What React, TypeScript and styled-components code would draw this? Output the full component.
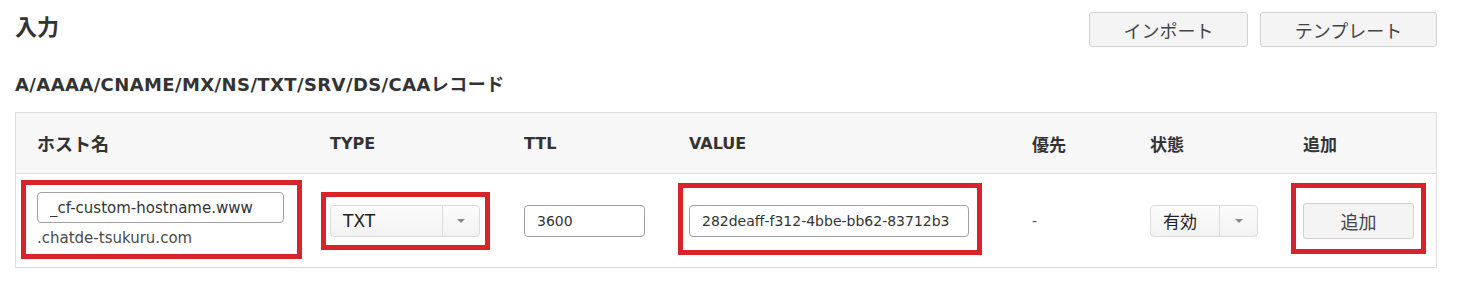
import React from "react";
import styled, { createGlobalStyle } from "styled-components";

const GlobalStyle = createGlobalStyle`
  html, body { margin: 0; padding: 0; background: #ffffff; }
  body {
    font-family: "DejaVu Sans", "Noto Sans CJK JP", sans-serif;
    color: #333333;
  }
  * { box-sizing: border-box; }
`;

const Page = styled.div`
  width: 1462px;
  padding: 12px 25px 0 15px;
`;

const TopBar = styled.div`
  display: flex;
  justify-content: space-between;
  align-items: flex-start;
`;

const Title = styled.h2`
  margin: 0;
  font-size: 22px;
  line-height: 31px;
  font-weight: 700;
  color: #333333;
`;

const ButtonGroup = styled.div`
  display: flex;
  gap: 12px;
`;

const GrayButton = styled.button<{ $width: number; $height?: number }>`
  width: ${(p) => p.$width}px;
  height: ${(p) => p.$height ?? 35}px;
  padding: 0;
  border: 1px solid #d2d2d2;
  border-radius: 3px;
  background: #f4f4f4;
  font-family: "Noto Sans CJK JP", sans-serif;
  font-size: 18px;
  color: #444444;
  cursor: pointer;
`;

const SubTitle = styled.h3`
  margin: 26px 0 15px;
  font-size: 18px;
  letter-spacing: 0.4px;
  line-height: 24px;
  font-weight: 700;
  color: #333333;
`;

const Table = styled.div`
  border: 1px solid #dddddd;
  width: 1422px;
`;

const columns = "293px 194px 165px 343px 118px 153px 154px";

const HeaderRow = styled.div`
  display: grid;
  grid-template-columns: ${columns};
  height: 61px;
  background: #f7f7f7;
  border-bottom: 1px solid #dddddd;
`;

const BodyRow = styled.div`
  display: grid;
  grid-template-columns: ${columns};
  height: 93px;
`;

const HeadCell = styled.div<{ $size?: number }>`
  display: flex;
  align-items: center;
  padding-left: 21px;
  font-size: ${(p) => p.$size ?? 16}px;
  font-weight: 700;
  color: #333333;
`;

const Cell = styled.div`
  display: flex;
  align-items: center;
  padding-left: 21px;
`;

const Stack = styled.div`
  display: flex;
  flex-direction: column;
`;

const TextInput = styled.input<{ $width: number; $height?: number; $size?: number }>`
  width: ${(p) => p.$width}px;
  height: ${(p) => p.$height ?? 32}px;
  padding: 0 12px;
  border: 1px solid #a0a0a0;
  border-radius: 4px;
  font-family: "DejaVu Sans", "Noto Sans CJK JP", sans-serif;
  font-size: ${(p) => p.$size ?? 14}px;
  color: #333333;
  background: #ffffff;
  outline: none;
`;

const Domain = styled.div`
  margin-top: 4px;
  font-size: 15px;
  line-height: 22px;
  color: #4a4a4a;
`;

const Select = styled.div<{ $width: number; $arrow: number }>`
  display: grid;
  grid-template-columns: 1fr ${(p) => p.$arrow}px;
  width: ${(p) => p.$width}px;
  height: 32px;
  border: 1px solid #dcdcdc;
  border-radius: 4px;
  background: linear-gradient(#fcfcfc, #f2f2f2);
`;

const SelectValue = styled.span`
  display: flex;
  align-items: center;
  padding-left: 12px;
  font-size: 17px;
  color: #222222;
`;

const SelectArrow = styled.span`
  display: flex;
  align-items: center;
  justify-content: center;
  border-left: 1px solid #dcdcdc;
  &::before {
    content: "";
    border-left: 4px solid transparent;
    border-right: 4px solid transparent;
    border-top: 4px solid #888888;
  }
`;

const Dash = styled.span`
  font-size: 14px;
  color: #555555;
`;

const Highlight = styled.div<{ $t: number; $r: number; $b: number; $l: number }>`
  position: relative;
  display: inline-flex;
  &::after {
    content: "";
    position: absolute;
    top: ${(p) => -p.$t}px;
    right: ${(p) => -p.$r}px;
    bottom: ${(p) => -p.$b}px;
    left: ${(p) => -p.$l}px;
    border: 5px solid #d9232b;
    pointer-events: none;
  }
`;

const SmallSelect = ({ value, width, arrow }: { value: string; width: number; arrow: number }) => (
  <Select $width={width} $arrow={arrow}>
    <SelectValue>{value}</SelectValue>
    <SelectArrow />
  </Select>
);

export default function App() {
  return (
    <>
      <GlobalStyle />
      <Page>
        <TopBar>
          <Title>入力</Title>
          <ButtonGroup>
            <GrayButton $width={159}>インポート</GrayButton>
            <GrayButton $width={177}>テンプレート</GrayButton>
          </ButtonGroup>
        </TopBar>
        <SubTitle>A/AAAA/CNAME/MX/NS/TXT/SRV/DS/CAAレコード</SubTitle>
        <Table>
          <HeaderRow>
            <HeadCell $size={18}>ホスト名</HeadCell>
            <HeadCell>TYPE</HeadCell>
            <HeadCell>TTL</HeadCell>
            <HeadCell>VALUE</HeadCell>
            <HeadCell $size={17}>優先</HeadCell>
            <HeadCell $size={17}>状態</HeadCell>
            <HeadCell $size={17}>追加</HeadCell>
          </HeaderRow>
          <BodyRow>
            <Cell>
              <Highlight $t={12} $r={18} $b={10} $l={16}>
                <Stack>
                  <TextInput $width={247} $height={31} $size={15} defaultValue="_cf-custom-hostname.www" />
                  <Domain>.chatde-tsukuru.com</Domain>
                </Stack>
              </Highlight>
            </Cell>
            <Cell>
              <Highlight $t={13} $r={10} $b={13} $l={9}>
                <SmallSelect value="TXT" width={150} arrow={37} />
              </Highlight>
            </Cell>
            <Cell>
              <TextInput $width={121} defaultValue="3600" />
            </Cell>
            <Cell>
              <Highlight $t={22} $r={13} $b={18} $l={11}>
                <TextInput $width={280} defaultValue="282deaff-f312-4bbe-bb62-83712b3" />
              </Highlight>
            </Cell>
            <Cell>
              <Dash>-</Dash>
            </Cell>
            <Cell>
              <SmallSelect value="有効" width={108} arrow={38} />
            </Cell>
            <Cell>
              <Highlight $t={20} $r={12} $b={15} $l={12}>
                <GrayButton $width={111} $height={36}>追加</GrayButton>
              </Highlight>
            </Cell>
          </BodyRow>
        </Table>
      </Page>
    </>
  );
}
